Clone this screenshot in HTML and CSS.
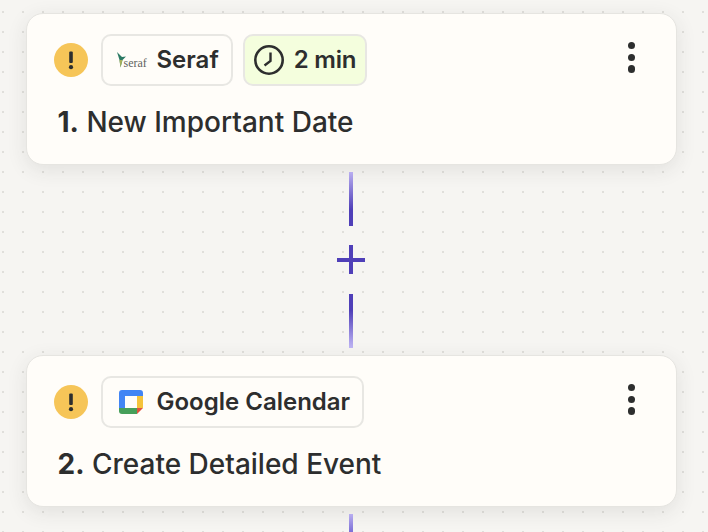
FILE: index.html
```html
<!DOCTYPE html>
<html lang="en">
<head>
<meta charset="utf-8">
<title>Workflow</title>
<link rel="stylesheet" href="styles.css">
</head>
<body>
<main class="canvas">
  <section class="card">
    <div class="card-top">
      <svg class="warn" viewBox="0 0 34 34" aria-hidden="true"><circle cx="17" cy="17" r="17" fill="#f6c558"/><rect x="15.2" y="8.5" width="3.6" height="11.5" rx="1" fill="#2d2e2e"/><circle cx="17" cy="24.2" r="2.1" fill="#2d2e2e"/></svg>
      <div class="chip">
        <span class="seraf-logo">
          <svg class="seraf-bird" viewBox="0 0 9 16" aria-hidden="true"><path d="M0 0 L5 5 L9 4.5 L5.5 8 L3.5 15.5 L2.5 8 Z" fill="#2b7a64"/><path d="M2.5 8 L5.5 8 L3.5 15.5 Z" fill="#a9b25a"/></svg>
          <span class="seraf-word">seraf</span>
        </span>
        <span class="chip-label">Seraf</span>
      </div>
      <div class="chip chip-time">
        <svg class="clock" viewBox="0 0 32 32" aria-hidden="true"><circle cx="16" cy="16" r="13.7" fill="none" stroke="#2d2e2e" stroke-width="2.6"/><path d="M17.5 8.5 V17 L11.5 21.5" fill="none" stroke="#2d2e2e" stroke-width="2.4"/></svg>
        <span class="chip-label chip-label-tight">2 min</span>
      </div>
      <div class="more" aria-label="More"><i></i><i></i><i></i></div>
    </div>
    <h2 class="title"><b>1.</b> New Important Date</h2>
  </section>

  <div class="connector">
    <div class="line line-down"></div>
    <svg class="plus" viewBox="0 0 28 29" aria-hidden="true"><path d="M12 0 H16 V13 H28 V17 H16 V29 H12 V17 H0 V13 H12 Z" fill="#4f3fb8"/></svg>
    <div class="line line-up"></div>
  </div>

  <section class="card">
    <div class="card-top">
      <svg class="warn" viewBox="0 0 34 34" aria-hidden="true"><circle cx="17" cy="17" r="17" fill="#f6c558"/><rect x="15.2" y="8.5" width="3.6" height="11.5" rx="1" fill="#2d2e2e"/><circle cx="17" cy="24.2" r="2.1" fill="#2d2e2e"/></svg>
      <div class="chip">
        <span class="gcal-box">
          <svg class="gcal" viewBox="0 0 24 24" aria-hidden="true">
            <path d="M3 0 H21 A3 3 0 0 1 24 3 V6 H6 V18 H0 V3 A3 3 0 0 1 3 0 Z" fill="#4285f4"/>
            <path d="M18 6 H24 V18 H18 Z" fill="#f5c33b"/>
            <path d="M0 18 H18 V24 H3 A3 3 0 0 1 0 21 Z" fill="#469f5a"/>
            <path d="M18 18 H24 L18 24 Z" fill="#e0523f"/>
          </svg>
        </span>
        <span class="chip-label">Google Calendar</span>
      </div>
      <div class="more" aria-label="More"><i></i><i></i><i></i></div>
    </div>
    <h2 class="title"><b>2.</b> Create Detailed Event</h2>
  </section>

  <div class="connector connector-tail">
    <div class="line line-tail"></div>
  </div>
</main>
</body>
</html>
```

FILE: styles.css
```css
* { box-sizing: border-box; }

html, body {
  margin: 0;
  height: 100%;
}

body {
  width: 708px;
  height: 532px;
  overflow: hidden;
  background-color: #f6f5f2;
  background-image: radial-gradient(circle, #e0dfdb 1px, transparent 1.2px);
  background-size: 20px 20px;
  background-position: -7px 2px;
  font-family: Inter, "Liberation Sans", sans-serif;
  color: #2d2e2e;
}

.canvas {
  display: flex;
  flex-direction: column;
  height: 532px;
  padding: 12.5px 31.5px 0 25.5px;
  overflow: hidden;
}

.card {
  height: 152px;
  flex: none;
  padding: 20px 27px 0;
  background: #fffdf9;
  border: 1.5px solid #e6e5e1;
  border-radius: 17px;
  box-shadow: 0 5px 20px rgba(45, 46, 46, 0.1);
}

.card-top {
  display: flex;
  align-items: center;
  height: 52px;
}

.warn {
  width: 34px;
  height: 34px;
  flex: none;
  margin-right: 13px;
}

.chip {
  display: flex;
  align-items: center;
  height: 52px;
  padding: 0 12px 0 14px;
  margin-right: 10px;
  background: #fffdf9;
  border: 2px solid #e8e7e3;
  border-radius: 10px;
}

.chip-time {
  padding: 0 9px 0 8px;
  background: #f4fedd;
}

.chip-label {
  font-size: 24px;
  font-weight: 600;
  line-height: 32px;
}

.chip-label-tight {
  letter-spacing: -0.2px;
}

.clock {
  width: 32px;
  height: 32px;
  margin-right: 9px;
}

.seraf-logo {
  display: flex;
  align-items: flex-end;
  width: 32px;
  height: 20px;
  margin: 0 8px 0 0;
}

.seraf-bird {
  width: 9px;
  height: 16px;
  flex: none;
  margin-bottom: 2px;
}

.seraf-word {
  font-family: "Liberation Serif", serif;
  font-size: 12px;
  line-height: 12px;
  color: #5f6360;
  margin: 0 0 1px -2px;
}

.gcal-box {
  display: flex;
  width: 24px;
  margin: 0 14px 0 2px;
}

.gcal {
  width: 24px;
  height: 24px;
}

.more {
  display: flex;
  flex-direction: column;
  gap: 4.3px;
  margin: -4.6px 13.3px 0 auto;
}

.more i {
  display: block;
  width: 7.4px;
  height: 7.4px;
  border-radius: 50%;
  background: #2d2e2e;
}

.title {
  margin: 17px 0 0 4px;
  font-size: 28px;
  font-weight: 500;
  line-height: 38px;
}

.title b {
  font-weight: 700;
}

.connector {
  display: flex;
  flex-direction: column;
  align-items: center;
  flex: none;
  height: 190px;
  padding-top: 7.5px;
}

.connector-tail {
  height: 25.5px;
}

.line {
  width: 4px;
  height: 54px;
  flex: none;
}

.line-down {
  background: linear-gradient(to bottom, #b9aef0, #4f3fb8 70%);
}

.line-up {
  background: linear-gradient(to bottom, #4f3fb8 30%, #c0b6f5);
}

.line-tail {
  height: 18px;
  background: linear-gradient(to bottom, #b9aef0, #7c6fd6);
}

.plus {
  width: 28px;
  height: 29px;
  margin: 19px 0 20px;
  flex: none;
}
```
